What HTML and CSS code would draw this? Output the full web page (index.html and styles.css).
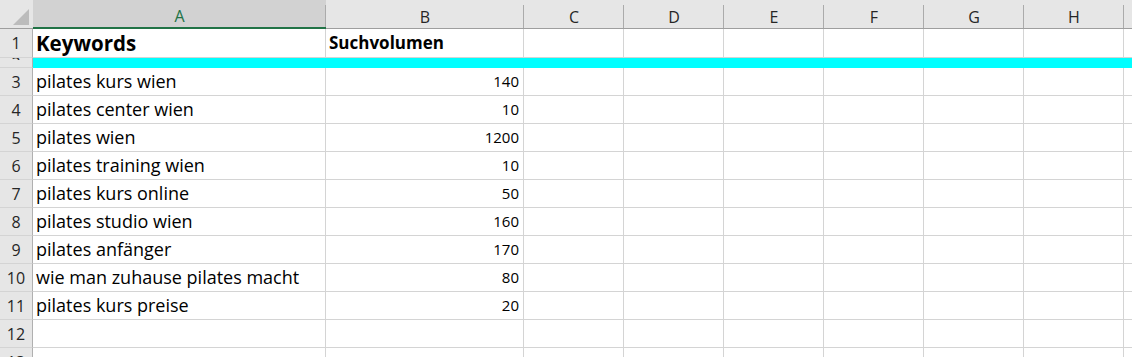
FILE: index.html
```html
<!DOCTYPE html>
<html lang="de">
<head>
  <meta charset="UTF-8">
  <meta name="viewport" content="width=device-width, initial-scale=1.0">
  <title>Keywords – Suchvolumen</title>
  <link rel="stylesheet" href="styles.css">
</head>
<body>
  <div class="sheet" id="sheet">
    <div class="corner">
      <svg width="33" height="28" viewBox="0 0 33 28"><polygon points="13,25 29,25 29,9" fill="#bcbcbc"/></svg>
    </div>
  </div>

  <script>
    const sheet = document.getElementById('sheet');
    const columns = ['A', 'B', 'C', 'D', 'E', 'F', 'G', 'H', 'I'];

    // Zeilen: [Keyword, Suchvolumen]; null = ausgeblendete Zeile (Markierung)
    const rows = [
      ['Keywords', 'Suchvolumen'],
      null,
      ['pilates kurs wien', 140],
      ['pilates center wien', 10],
      ['pilates wien', 1200],
      ['pilates training wien', 10],
      ['pilates kurs online', 50],
      ['pilates studio wien', 160],
      ['pilates anfänger', 170],
      ['wie man zuhause pilates macht', 80],
      ['pilates kurs preise', 20],
      ['', ''],
      ['', '']
    ];

    const cell = (cls, text) => {
      const div = document.createElement('div');
      div.className = cls;
      if (text !== undefined && text !== '') div.textContent = text;
      sheet.appendChild(div);
      return div;
    };

    // Spaltenköpfe
    columns.forEach((col, i) => {
      cell(i === 0 ? 'col-head active' : 'col-head', col);
    });

    rows.forEach((row, r) => {
      const nr = r + 1;
      if (row === null) {
        const head = cell('row-head short');
        const label = document.createElement('span');
        label.className = 'clip';
        label.innerHTML = '<span>' + nr + '</span>';
        head.appendChild(label);
        columns.forEach(() => cell('cell marked'));
        return;
      }
      cell('row-head', nr);
      if (r === 0) {
        cell('cell title', row[0]);
        cell('cell subtitle', row[1]);
      } else {
        cell('cell', row[0]);
        cell('cell num', row[1]);
      }
      for (let i = 2; i < columns.length; i++) cell('cell');
    });
  </script>
</body>
</html>
```

FILE: styles.css
```css
body {
  margin: 0;
  background-color: #fff;
  font-family: "Open Sans", "Noto Sans", sans-serif;
  color: #000;
  overflow: hidden;
}
.sheet {
  display: grid;
  grid-template-columns: 33px 293px 198px repeat(7, 100px);
  grid-template-rows: 29px 29px 10px repeat(11, 28px);
  width: max-content;
}
.sheet > div {
  box-sizing: border-box;
  overflow: hidden;
  white-space: nowrap;
}
.corner {
  background-color: #e6e6e6;
  border-bottom: 1px solid #9e9e9e;
}
.corner svg {
  display: block;
}
.col-head {
  display: flex;
  justify-content: center;
  align-items: center;
  padding-top: 5px;
  font-size: 16px;
  color: #262626;
  background: linear-gradient(#ababab, #ababab) right top 5px / 1px 100% no-repeat;
  background-color: #e6e6e6;
  border-bottom: 1px solid #9e9e9e;
}
.col-head.active {
  background-color: #d2d2d2;
  color: #217346;
  border-bottom: 2px solid #217346;
}
.row-head {
  display: flex;
  justify-content: center;
  align-items: center;
  font-size: 16px;
  color: #262626;
  background-color: #e6e6e6;
  border-right: 1px solid #b0b0b0;
  border-bottom: 1px solid #d4d4d4;
}
.row-head.short {
  align-items: flex-start;
}
.clip {
  display: block;
  height: 2px;
  overflow: hidden;
  line-height: 16px;
}
.clip span {
  display: block;
  margin-top: -3px;
}
.cell {
  display: flex;
  align-items: center;
  padding: 0 4px 1px 3px;
  font-size: 18px;
  border-right: 1px solid #d4d4d4;
  border-bottom: 1px solid #d4d4d4;
}
.cell.num {
  justify-content: flex-end;
  font-size: 15px;
}
.cell.title {
  font-size: 20.5px;
  font-weight: bold;
}
.cell.subtitle {
  font-size: 17px;
  font-weight: bold;
}
.cell.marked {
  background-color: #00ffff;
  border-color: #00ffff;
}
```
